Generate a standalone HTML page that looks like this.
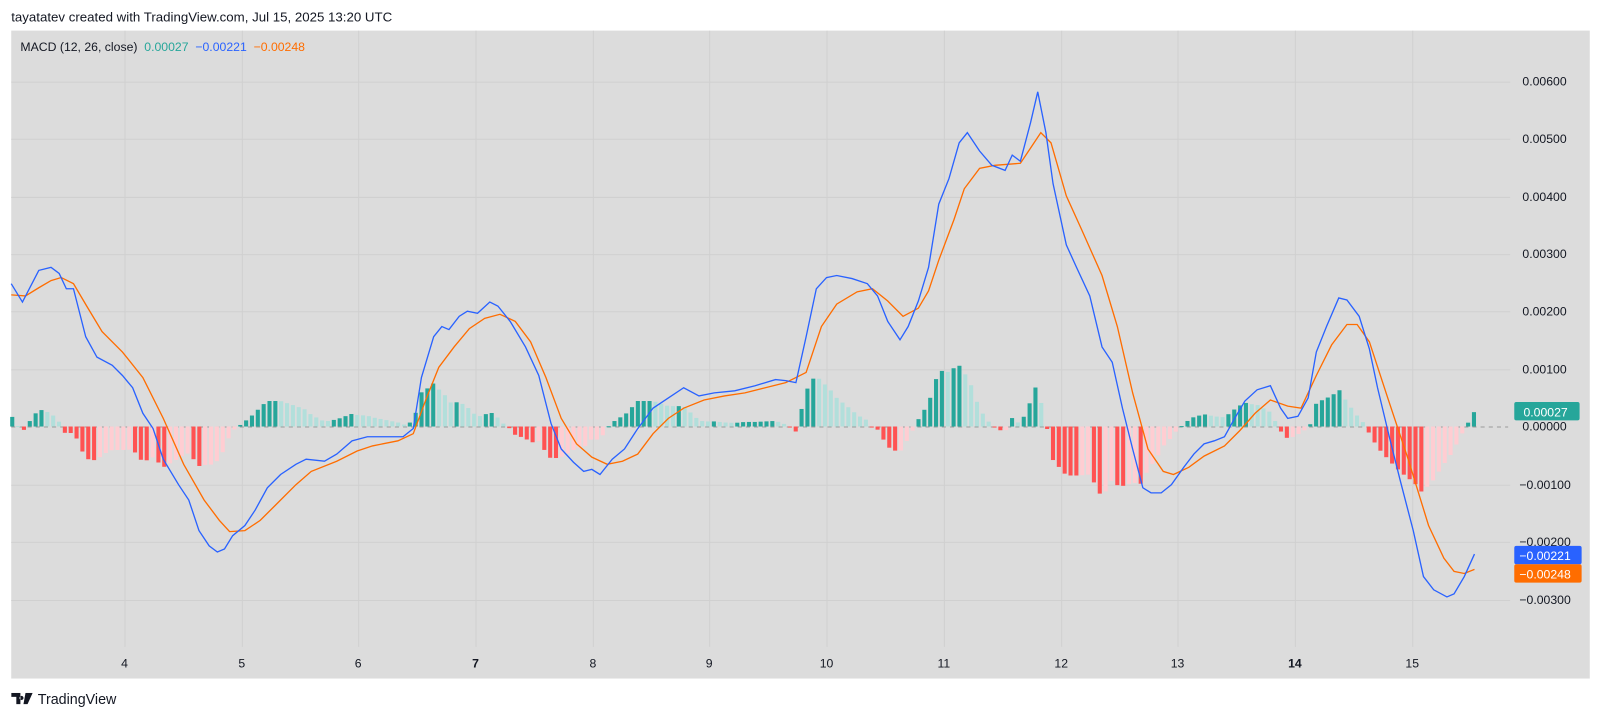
<!DOCTYPE html>
<html><head><meta charset="utf-8"><style>
body{margin:0;width:1600px;height:718px;background:#fff;font-family:"Liberation Sans",sans-serif;overflow:hidden}
#w{position:relative;width:1568px;height:704px;transform:scale(1.0204);transform-origin:0 0}
.t{position:absolute;white-space:nowrap}
</style></head><body><div id="w">
<div class="t" style="left:11px;top:9px;font-size:13px;color:#131722">tayatatev created with TradingView.com, Jul 15, 2025 13:20 UTC</div>
<svg id="c" width="1568" height="704" style="position:absolute;left:0;top:0">
<rect x="11" y="30" width="1547" height="635" fill="#dcdcdc"/>
<g id="grid" stroke="#d0d0d0" stroke-width="1"></g>
<line x1="11" y1="418.5" x2="1478" y2="418.5" stroke="#9a9a9a" stroke-dasharray="4,4"/>
<g id="bars"></g>
<polyline id="sig" fill="none" stroke="#ff6d00" stroke-width="1.3"/>
<polyline id="mac" fill="none" stroke="#2962ff" stroke-width="1.3"/>
<g font-size="12" fill="#131722" font-family="Liberation Sans, sans-serif">
<text x="1492" y="84">0.00600</text><text x="1492" y="140">0.00500</text><text x="1492" y="197">0.00400</text><text x="1492" y="253">0.00300</text><text x="1492" y="309">0.00200</text><text x="1492" y="366">0.00100</text><text x="1492" y="422">0.00000</text><text x="1489" y="479">−0.00100</text><text x="1489" y="535">−0.00200</text><text x="1489" y="592">−0.00300</text>
</g>
<rect x="1484" y="394" width="64" height="18" rx="2" fill="#26a69a"/><text x="1493" y="408" font-size="12" fill="#fff">0.00027</text>
<rect x="1484" y="535" width="66" height="18" rx="2" fill="#2962ff"/><text x="1489" y="549" font-size="12" fill="#fff">−0.00221</text>
<rect x="1484" y="553" width="66" height="18" rx="2" fill="#ff6d00"/><text x="1489" y="567" font-size="12" fill="#fff">−0.00248</text>
<g font-size="12" fill="#131722" text-anchor="middle" id="xl"></g>
</svg>
<div class="t" style="left:20px;top:39px;font-size:12px;color:#131722">MACD (12, 26, close) <span style="color:#26a69a">&nbsp;0.00027</span> <span style="color:#2962ff">&nbsp;−0.00221</span> <span style="color:#ff6d00">&nbsp;−0.00248</span></div>
<svg style="position:absolute;left:11px;top:679px" width="22" height="12"><path d="M0 0h9v11h-4v-7h-5z M10 3a2 2 0 1 0 0.1 0z M14 0h7l-5 11h-4z" fill="#131722"/></svg>
<div class="t" style="left:37px;top:677px;font-size:14px;color:#131722">TradingView</div>
</div>
<script>
var NS="http://www.w3.org/2000/svg";
var M=[[11,278],[22,296],[38,265],[50,262],[58,268],[65,283],[72,283],[84,330],[95,350],[110,358],[120,368],[130,380],[140,405],[150,420],[160,450],[175,475],[185,490],[195,520],[205,535],[213,541],[220,538],[228,525],[240,515],[250,500],[262,478],[275,465],[290,455],[300,450],[318,452],[330,445],[345,432],[360,428],[380,428],[395,428],[405,420],[413,370],[425,330],[433,320],[440,323],[450,310],[458,305],[468,307],[480,296],[488,300],[500,315],[515,340],[528,368],[540,415],[550,440],[562,453],[572,462],[580,460],[588,465],[600,450],[612,440],[625,420],[640,400],[655,390],[670,380],[685,388],[700,385],[720,383],[740,378],[760,372],[770,373],[780,375],[790,330],[800,283],[810,272],[820,270],[835,273],[850,278],[860,290],[870,315],[882,333],[890,320],[900,295],[910,262],[920,200],[930,175],[940,140],[948,130],[960,148],[972,162],[985,167],[992,152],[1000,158],[1010,120],[1017,90],[1025,130],[1032,180],[1045,240],[1055,262],[1068,290],[1080,340],[1090,355],[1100,400],[1110,440],[1120,478],[1128,483],[1138,483],[1148,475],[1160,458],[1170,445],[1180,435],[1190,432],[1200,428],[1210,410],[1220,393],[1232,382],[1245,378],[1255,400],[1262,410],[1272,408],[1282,390],[1290,345],[1300,320],[1312,292],[1320,294],[1332,310],[1342,342],[1350,380],[1362,430],[1372,470],[1385,520],[1395,565],[1405,578],[1418,585],[1425,582],[1435,565],[1445,543]];
var S=[[11,289],[25,290],[38,282],[50,275],[60,272],[72,278],[85,300],[100,325],[120,345],[140,370],[160,410],[180,455],[200,490],[215,510],[225,521],[240,520],[255,510],[270,495],[290,475],[305,462],[330,452],[350,442],[365,437],[390,432],[405,425],[418,390],[430,360],[445,340],[460,322],[475,312],[490,308],[505,315],[520,335],[535,370],[550,410],[565,435],[580,448],[595,455],[610,452],[625,445],[640,425],[655,410],[670,400],[690,392],[710,388],[730,385],[750,380],[770,375],[790,365],[805,320],[820,298],[840,286],[855,283],[870,295],[885,310],[900,302],[910,285],[920,255],[935,215],[945,185],[960,165],[975,162],[1000,160],[1010,145],[1020,130],[1030,140],[1045,192],[1060,225],[1080,270],[1095,320],[1110,385],[1125,440],[1140,462],[1150,465],[1165,458],[1180,447],[1200,437],[1215,422],[1230,405],[1245,392],[1262,398],[1275,400],[1290,368],[1305,338],[1320,318],[1330,318],[1342,335],[1360,390],[1380,450],[1400,515],[1415,547],[1425,560],[1435,562],[1445,558]];
function pts(a){return a.map(function(p){return p.join(",")}).join(" ")}
document.getElementById("mac").setAttribute("points",pts(M));
document.getElementById("sig").setAttribute("points",pts(S));
function it(a,x){for(var i=1;i<a.length;i++){if(x<=a[i][0]){var t=(x-a[i-1][0])/(a[i][0]-a[i-1][0]);return a[i-1][1]+t*(a[i][1]-a[i-1][1]);}}return a[a.length-1][1];}
var g=document.getElementById("grid");
var ys=[80,136,193,249,305,362,475,531,588];
ys.forEach(function(y){var l=document.createElementNS(NS,"line");l.setAttribute("x1",11);l.setAttribute("x2",1480);l.setAttribute("y1",y+.5);l.setAttribute("y2",y+.5);g.appendChild(l);});
var xs=[122,237,351,466,581,695,810,925,1040,1154,1269,1384],lb=["4","5","6","7","8","9","10","11","12","13","14","15"];
var xl=document.getElementById("xl");
xs.forEach(function(x,i){var l=document.createElementNS(NS,"line");l.setAttribute("x1",x+.5);l.setAttribute("x2",x+.5);l.setAttribute("y1",30);l.setAttribute("y2",634);g.appendChild(l);
var t=document.createElementNS(NS,"text");t.setAttribute("x",x);t.setAttribute("y",654);t.textContent=lb[i];if(lb[i]=="7"||lb[i]=="14")t.setAttribute("font-weight","bold");xl.appendChild(t);});
var b=document.getElementById("bars"),prev=0;
for(var x=12;x<=1446;x+=5.73){var h=(it(S,x)-it(M,x));var c;
if(h>=0)c=(h>=prev)?"#26a69a":"#b2dfdb";else c=(h<=prev)?"#ff5252":"#ffcdd2";
prev=h;var r=document.createElementNS(NS,"rect");r.setAttribute("x",x-2);r.setAttribute("width",4);
r.setAttribute("y",h>=0?418-h:418);r.setAttribute("height",Math.max(1,Math.abs(h)));r.setAttribute("fill",c);b.appendChild(r);}
</script>
</body></html>
